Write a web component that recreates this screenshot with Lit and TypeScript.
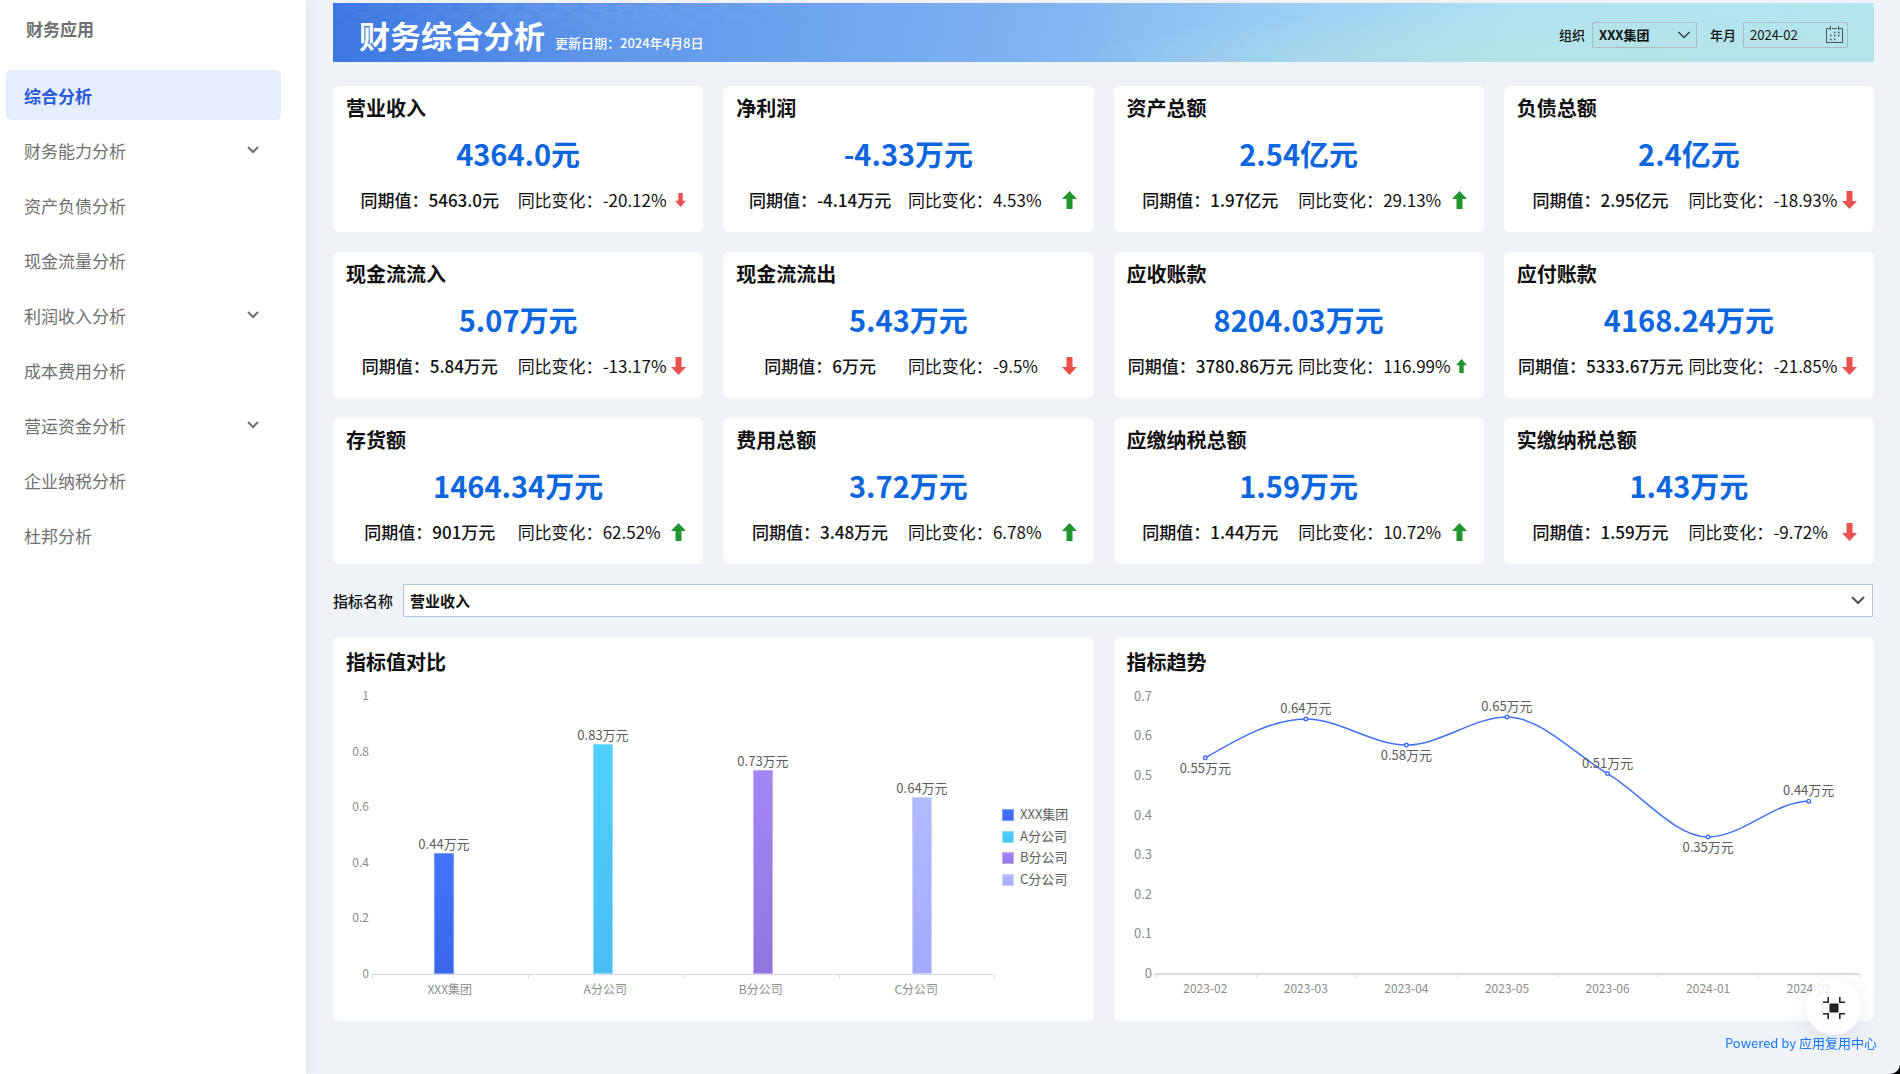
import { LitElement, html, svg, css } from "lit";
import { customElement, property, state } from "lit/decorators.js";
import { classMap } from "lit/directives/class-map.js";

interface Metric {
  name: string;
  value: string;
  previous: string;
  change: string;
  up: boolean;
  compact?: boolean;
}

interface Point {
  x: number;
  y: number;
}

const MENU = [
  { label: "综合分析", active: true },
  { label: "财务能力分析", expandable: true },
  { label: "资产负债分析" },
  { label: "现金流量分析" },
  { label: "利润收入分析", expandable: true },
  { label: "成本费用分析" },
  { label: "营运资金分析", expandable: true },
  { label: "企业纳税分析" },
  { label: "杜邦分析" },
];

const METRICS: Metric[] = [
  { name: "营业收入", value: "4364.0元", previous: "5463.0元", change: "-20.12%", up: false, compact: true },
  { name: "净利润", value: "-4.33万元", previous: "-4.14万元", change: "4.53%", up: true },
  { name: "资产总额", value: "2.54亿元", previous: "1.97亿元", change: "29.13%", up: true },
  { name: "负债总额", value: "2.4亿元", previous: "2.95亿元", change: "-18.93%", up: false },
  { name: "现金流流入", value: "5.07万元", previous: "5.84万元", change: "-13.17%", up: false },
  { name: "现金流流出", value: "5.43万元", previous: "6万元", change: "-9.5%", up: false },
  { name: "应收账款", value: "8204.03万元", previous: "3780.86万元", change: "116.99%", up: true, compact: true },
  { name: "应付账款", value: "4168.24万元", previous: "5333.67万元", change: "-21.85%", up: false },
  { name: "存货额", value: "1464.34万元", previous: "901万元", change: "62.52%", up: true },
  { name: "费用总额", value: "3.72万元", previous: "3.48万元", change: "6.78%", up: true },
  { name: "应缴纳税总额", value: "1.59万元", previous: "1.44万元", change: "10.72%", up: true },
  { name: "实缴纳税总额", value: "1.43万元", previous: "1.59万元", change: "-9.72%", up: false },
];

const COMPANIES = [
  { name: "XXX集团", value: 0.4364, label: "0.44万元", from: "#4174ff", to: "#3c68ea", edge: "#7c9cf8" },
  { name: "A分公司", value: 0.828, label: "0.83万元", from: "#50d0ff", to: "#4abdf6", edge: "#8fdfff" },
  { name: "B分公司", value: 0.733, label: "0.73万元", from: "#a585f5", to: "#9176dc", edge: "#c3aef6" },
  { name: "C分公司", value: 0.638, label: "0.64万元", from: "#b2baff", to: "#a3a9fd", edge: "#cdd2ff" },
];

const TREND = [
  { month: "2023-02", value: 0.546, label: "0.55万元", below: true },
  { month: "2023-03", value: 0.644, label: "0.64万元" },
  { month: "2023-04", value: 0.578, label: "0.58万元", below: true },
  { month: "2023-05", value: 0.649, label: "0.65万元" },
  { month: "2023-06", value: 0.506, label: "0.51万元" },
  { month: "2024-01", value: 0.346, label: "0.35万元", below: true },
  { month: "2024-02", value: 0.4364, label: "0.44万元" },
];

/** Monotone cubic curve: flat at every peak, valley and at the last point. */
function smoothPath(points: Point[]): string {
  const chord = (i: number) =>
    (points[i + 1].y - points[i].y) / (points[i + 1].x - points[i].x);
  const last = points.length - 1;
  const slopes = points.map((_, i) => {
    if (i === 0) return chord(0) * 1.5;
    if (i === last) return 0;
    const a = chord(i - 1);
    const b = chord(i);
    return a * b <= 0 ? 0 : (a + b) / 2;
  });
  let d = `M${points[0].x} ${points[0].y}`;
  for (let i = 0; i < last; i++) {
    const a = points[i];
    const b = points[i + 1];
    const h = (b.x - a.x) / 3;
    d += `C${a.x + h} ${a.y + h * slopes[i]} ${b.x - h} ${b.y - h * slopes[i + 1]} ${b.x} ${b.y}`;
  }
  return d;
}

const chartStyles = css`
  :host {
    display: block;
    height: 344px;
    font-family: "Noto Sans CJK SC", sans-serif;
  }
  .chart {
    display: block;
    width: 100%;
    height: 100%;
  }
  .axis-label {
    fill: #8c8c8c;
    font-size: 12px;
  }
  .axis-label.large {
    font-size: 13px;
  }
  .value-label {
    fill: #5c5c5c;
    font-size: 13px;
  }
  .middle {
    text-anchor: middle;
  }
  .end {
    text-anchor: end;
  }
  .axis {
    fill: none;
    stroke: #d9dbe2;
  }
  .curve {
    fill: none;
    stroke: #4070f4;
    stroke-width: 1.5;
  }
  .dot {
    fill: #fff;
    stroke: #4070f4;
    stroke-width: 1.4;
  }
`;

class SizedChart extends LitElement {
  static styles = chartStyles;
  @state() protected width = 760;
  private observer = new ResizeObserver(([entry]) => {
    this.width = Math.floor(entry.contentRect.width);
  });

  connectedCallback() {
    super.connectedCallback();
    this.observer.observe(this);
  }

  disconnectedCallback() {
    this.observer.disconnect();
    super.disconnectedCallback();
  }
}

@customElement("bar-chart")
class BarChart extends SizedChart {
  render() {
    const left = 39;
    const right = this.width - 99;
    const bottom = 297;
    const span = 278;
    const band = (right - left) / COMPANIES.length;
    const ticks = [0, 0.2, 0.4, 0.6, 0.8, 1];
    return html`
      <svg class="chart" role="img" aria-label="指标值对比">
        <defs>
          ${COMPANIES.map(
            (c, i) => svg`
              <linearGradient id="fill-${i}" x1="0" y1="0" x2="0" y2="1">
                <stop offset="0" stop-color=${c.from} />
                <stop offset="1" stop-color=${c.to} />
              </linearGradient>`
          )}
        </defs>
        ${ticks.map(
          (t) => svg`<text class="axis-label end" x="36" y=${bottom - t * span + 4}>${t}</text>`
        )}
        <path
          class="axis"
          d=${`M${left} ${bottom + 0.5}H${right}` +
          [0, 1, 2, 3, 4].map((i) => `M${Math.round(left + i * band) + 0.5} ${bottom + 0.5}v4`).join("")}
        />
        ${COMPANIES.map((c, i) => {
          const middle = left + band * (i + 0.5);
          const x = Math.round(middle - 16 + (i * band) / 40);
          const h = Math.round(c.value * span);
          return svg`
            <rect x=${x + 0.5} y=${bottom - h + 0.5} width="19" height=${h - 1}
              fill="url(#fill-${i})" stroke=${c.edge} />
            <text class="value-label middle" x=${x + 10} y=${bottom - h - 4}>${c.label}</text>
            <text class="axis-label middle" x=${middle} y=${bottom + 20}>${c.name}</text>`;
        })}
        ${COMPANIES.map((c, i) => {
          const y = 132 + Math.round(i * 21.6);
          return svg`
            <rect x=${this.width - 90.5} y=${y + 0.5} width="11" height="11"
              fill="url(#fill-${i})" stroke=${c.edge} />
            <text class="value-label" x=${this.width - 73} y=${y + 10}>${c.name}</text>`;
        })}
      </svg>
    `;
  }
}

@customElement("trend-chart")
class TrendChart extends SizedChart {
  render() {
    const left = 41;
    const right = this.width - 15;
    const bottom = 297;
    const scale = 396;
    const band = (right - left) / TREND.length;
    const points = TREND.map((t, i) => ({
      x: left + band * (i + 0.5),
      y: bottom - t.value * scale,
    }));
    const ticks = [0, 0.1, 0.2, 0.3, 0.4, 0.5, 0.6, 0.7];
    return html`
      <svg class="chart" role="img" aria-label="指标趋势">
        ${ticks.map(
          (t) => svg`<text class="axis-label large end" x="38" y=${bottom - t * scale + 4}>${t}</text>`
        )}
        <path class="axis" stroke-width="2" d="M${left} ${bottom}H${right}" />
        <path
          class="axis"
          d=${TREND.concat(TREND[0])
            .map((_, i) => `M${Math.round(left + i * band) + 0.5} ${bottom}v4`)
            .join("")}
        />
        <path class="curve" d=${smoothPath(points)} />
        ${TREND.map(
          (t, i) => svg`
            <circle class="dot" cx=${points[i].x} cy=${points[i].y} r="1.8" />
            <text class="value-label middle" x=${points[i].x}
              y=${points[i].y + (t.below ? 15 : -6)}>${t.label}</text>
            <text class="axis-label middle" x=${points[i].x} y=${bottom + 19}>${t.month}</text>`
        )}
      </svg>
    `;
  }
}

@customElement("metric-card")
class MetricCard extends LitElement {
  @property({ attribute: false }) metric!: Metric;

  static styles = css`
    :host {
      display: block;
      min-width: 0;
      background: #fff;
      border-radius: 6px;
      padding: 8px 0 16px;
      color: #111;
    }
    .name {
      margin: 0;
      padding: 0 13px;
      font-size: 20px;
      line-height: 28px;
      font-weight: 700;
    }
    .value {
      margin: 10px 0 10px;
      text-align: center;
      font-size: 29px;
      line-height: 42px;
      font-weight: 700;
      color: #0d66de;
    }
    .compare {
      display: grid;
      grid-template-columns: 25fr 24fr;
      padding: 0 17px 0 9px;
      font-size: 17px;
      line-height: 32px;
      white-space: nowrap;
    }
    .previous {
      display: flex;
      justify-content: center;
      min-width: 0;
      font-weight: 500;
    }
    .change {
      display: flex;
      align-items: center;
      justify-content: space-between;
      min-width: 0;
    }
    .arrow {
      flex: none;
      width: 15px;
      height: 18px;
      fill: #e9514f;
    }
    .arrow.up {
      fill: #22942e;
    }
    .arrow.compact {
      width: 11px;
      height: 14px;
    }
  `;

  render() {
    const m = this.metric;
    return html`
      <h2 class="name">${m.name}</h2>
      <div class="value">${m.value}</div>
      <div class="compare">
        <div class="previous">同期值：${m.previous}</div>
        <div class="change">
          <span>同比变化：${m.change}</span>
          <svg
            class=${classMap({ arrow: true, up: m.up, compact: !!m.compact })}
            viewBox="0 0 15 18"
            preserveAspectRatio="none"
            aria-hidden="true"
          >
            <path d=${m.up ? "M7.5 0L15 8H10.5V18H4.5V8H0Z" : "M7.5 18L15 10H10.5V0H4.5V10H0Z"} />
          </svg>
        </div>
      </div>
    `;
  }
}

@customElement("app-root")
class AppRoot extends LitElement {
  static styles = css`
    :host {
      display: block;
      background: #000;
      font-family: "Noto Sans CJK SC", sans-serif;
      color: #111;
    }
    .page {
      display: flex;
      min-height: 100vh;
      background: #eff3f8;
      border-bottom-right-radius: 10px;
    }
    .sidebar {
      flex: none;
      box-sizing: border-box;
      width: 306px;
      padding: 14px 25px 0 6px;
      background: #fff;
      box-shadow: 0 0 12px rgba(40, 60, 110, 0.12);
      color: #707070;
    }
    .app-name {
      margin: 0 0 26px;
      padding-left: 20px;
      font-size: 17px;
      line-height: 30px;
      font-weight: 700;
    }
    .menu {
      display: flex;
      flex-direction: column;
      gap: 5px;
      margin: 0;
      padding: 0;
      list-style: none;
    }
    .menu-link {
      display: flex;
      align-items: center;
      justify-content: space-between;
      height: 50px;
      padding: 0 22px 0 18px;
      border-radius: 5px;
      color: inherit;
      font-size: 17px;
      text-decoration: none;
    }
    .menu-link.active {
      background: #e5eeff;
      color: #2859da;
      font-weight: 700;
    }
    .chevron {
      width: 12px;
      height: 8px;
      fill: none;
      stroke: #707070;
      stroke-width: 2;
    }
    .main {
      flex: 1;
      min-width: 0;
      padding: 3px 26px 0 27px;
    }
    .banner {
      display: flex;
      align-items: center;
      justify-content: space-between;
      box-sizing: border-box;
      height: 59px;
      margin-bottom: 24px;
      padding: 4px 26px 0;
      position: relative;
      background:
        radial-gradient(ellipse 30% 90% at 78% 100%, rgba(184, 230, 218, 0.6), rgba(184, 230, 218, 0)),
        linear-gradient(
          100deg,
          #3b76e2 0%,
          #5d95ea 17%,
          #6ea5ee 32%,
          #80b3f2 46%,
          #9bcef4 62%,
          #b0e2f4 76%,
          #b4e4ec 100%
        );
    }
    .texture {
      position: absolute;
      left: 0;
      top: 0;
      width: 520px;
      height: 59px;
    }
    .heading {
      display: flex;
      align-items: baseline;
      gap: 10px;
      position: relative;
      color: #fff;
    }
    .title {
      margin: 0;
      font-size: 31px;
      line-height: 42px;
      font-weight: 700;
    }
    .updated {
      font-size: 13px;
      font-weight: 500;
    }
    .filters {
      display: flex;
      align-items: center;
      gap: 13px;
    }
    .filter {
      display: flex;
      align-items: center;
      gap: 7px;
      font-size: 13px;
      font-weight: 500;
    }
    .field {
      display: flex;
      align-items: center;
      position: relative;
    }
    .control {
      box-sizing: border-box;
      width: 105px;
      height: 26px;
      padding: 0 6px;
      border: 1px solid #b1b7bf;
      border-radius: 1px;
      background: transparent;
      color: #111;
      font: inherit;
      font-size: 13px;
      font-weight: 700;
      appearance: none;
      outline: none;
    }
    .date {
      font-weight: 400;
    }
    .field-icon {
      position: absolute;
      right: 7px;
      width: 12px;
      height: 8px;
      fill: none;
      stroke: #2c3a45;
      stroke-width: 1.3;
      pointer-events: none;
    }
    .picker {
      display: flex;
      position: absolute;
      right: 5px;
      padding: 0;
      border: 0;
      background: none;
      cursor: pointer;
    }
    .calendar {
      width: 17px;
      height: 17px;
      fill: none;
      stroke: #46525c;
    }
    .metrics {
      display: grid;
      grid-template-columns: repeat(4, minmax(0, 1fr));
      gap: 20px;
    }
    .selector {
      display: flex;
      align-items: center;
      gap: 10px;
      margin: 20px 1px 20px 0;
      font-size: 15px;
      font-weight: 500;
    }
    .selector .field {
      flex: 1;
    }
    .selector .control {
      width: 100%;
      height: 33px;
      border-color: #b0c4d9;
      border-radius: 0;
      background: #fff;
      font-size: 15px;
    }
    .selector .field-icon {
      right: 8px;
      width: 14px;
      height: 9px;
      stroke: #50505a;
      stroke-width: 2;
    }
    .charts {
      display: grid;
      grid-template-columns: repeat(2, minmax(0, 1fr));
      gap: 20px;
    }
    .panel {
      padding-top: 10px;
      background: #fff;
      border-radius: 6px;
    }
    .panel-title {
      margin: 0;
      padding: 0 13px;
      font-size: 20px;
      line-height: 30px;
      font-weight: 700;
    }
    .footer {
      display: flex;
      justify-content: flex-end;
      margin-right: -3px;
      padding-top: 11px;
      font-size: 13px;
      line-height: 22px;
    }
    .powered {
      position: relative;
      z-index: 2;
      color: #1677ff;
      text-decoration: none;
    }
    .collapse {
      display: flex;
      align-items: center;
      justify-content: center;
      position: fixed;
      right: 39px;
      bottom: 39px;
      z-index: 1;
      width: 55px;
      height: 55px;
      padding: 0;
      border: 0;
      border-radius: 50%;
      background: rgba(255, 255, 255, 0.82);
      box-shadow: 0 4px 20px rgba(60, 80, 130, 0.12);
      cursor: pointer;
    }
    .collapse-icon {
      width: 22px;
      height: 22px;
      fill: none;
      stroke: #222;
      stroke-width: 1.6;
    }
  `;

  render() {
    return html`
      <div class="page">
        <nav class="sidebar" aria-label="财务应用">
          <h2 class="app-name">财务应用</h2>
          <ul class="menu">
            ${MENU.map(
              (item) => html`
                <li>
                  <a href="#" class=${classMap({ "menu-link": true, active: !!item.active })}>
                    <span>${item.label}</span>
                    ${item.expandable
                      ? html`<svg class="chevron" viewBox="0 0 12 8" aria-hidden="true">
                          <path d="M1 1L6 6L11 1" />
                        </svg>`
                      : null}
                  </a>
                </li>
              `
            )}
          </ul>
        </nav>
        <main class="main">
          <header class="banner">
            <svg class="texture" aria-hidden="true">
              <defs>
                <pattern id="cells" width="31" height="17" patternUnits="userSpaceOnUse">
                  <path d="M2 4L7 .5H24L29 4L24 8H7Z" fill="#fff" />
                  <path
                    d="M-13.500 12.500L-8.500 9H8.500L13.500 12.500L8.500 16.500H-8.500ZM17.500 12.500L22.500 9H39.500L44.500 12.500L39.500 16.500H22.500Z"
                    fill="#fff"
                  />
                </pattern>
                <radialGradient id="fade" cx=".4" cy="0" r=".6">
                  <stop offset="0" stop-color="#fff" />
                  <stop offset="1" stop-color="#000" />
                </radialGradient>
                <mask id="veil"><rect width="520" height="59" fill="url(#fade)" /></mask>
              </defs>
              <rect width="520" height="59" fill="url(#cells)" mask="url(#veil)" opacity=".06" />
            </svg>
            <div class="heading">
              <h1 class="title">财务综合分析</h1>
              <span class="updated">更新日期：2024年4月8日</span>
            </div>
            <div class="filters">
              <div class="filter">
                <label for="org">组织</label>
                <div class="field">
                  <select id="org" class="control">
                    <option>XXX集团</option>
                  </select>
                  <svg class="field-icon" viewBox="0 0 12 8" aria-hidden="true">
                    <path d="M.5 1L6 6.500L11.500 1" />
                  </svg>
                </div>
              </div>
              <div class="filter">
                <label for="month">年月</label>
                <div class="field">
                  <input id="month" class="control date" type="text" value="2024-02" />
                  <button class="picker" type="button" aria-label="选择年月">
                    <svg class="calendar" viewBox="0 0 17 17">
                      <path d="M4 2.500H.5V16.500H16.500V2.500H13M6 2.500H11M4.500 0V4M12.500 0V4" />
                      <path d="M8 6.500h1.500M12 6.500h1.500M4 9.500h1.500M8 9.500h1.500M12 9.500h1.500M4 13.500h1.500M8 13.500h1.500" stroke-width="1.500" />
                    </svg>
                  </button>
                </div>
              </div>
            </div>
          </header>
          <section class="metrics">
            ${METRICS.map((m) => html`<metric-card .metric=${m}></metric-card>`)}
          </section>
          <div class="selector">
            <label for="indicator">指标名称</label>
            <div class="field">
              <select id="indicator" class="control">
                <option>营业收入</option>
              </select>
              <svg class="field-icon" viewBox="0 0 14 9" aria-hidden="true">
                <path d="M1 1L7 7L13 1" />
              </svg>
            </div>
          </div>
          <section class="charts">
            <article class="panel">
              <h2 class="panel-title">指标值对比</h2>
              <bar-chart></bar-chart>
            </article>
            <article class="panel">
              <h2 class="panel-title">指标趋势</h2>
              <trend-chart></trend-chart>
            </article>
          </section>
          <footer class="footer">
            <a class="powered" href="#">Powered by 应用复用中心</a>
          </footer>
        </main>
        <button class="collapse" type="button" aria-label="退出全屏">
          <svg class="collapse-icon" viewBox="0 0 22 22">
            <rect x="6.500" y="6.500" width="9" height="9" fill="#222" stroke="none" />
            <path d="M0 5.200H5.200V0M16.800 0V5.200H22M0 16.800H5.200V22M16.800 22V16.800H22" />
          </svg>
        </button>
      </div>
    `;
  }
}
